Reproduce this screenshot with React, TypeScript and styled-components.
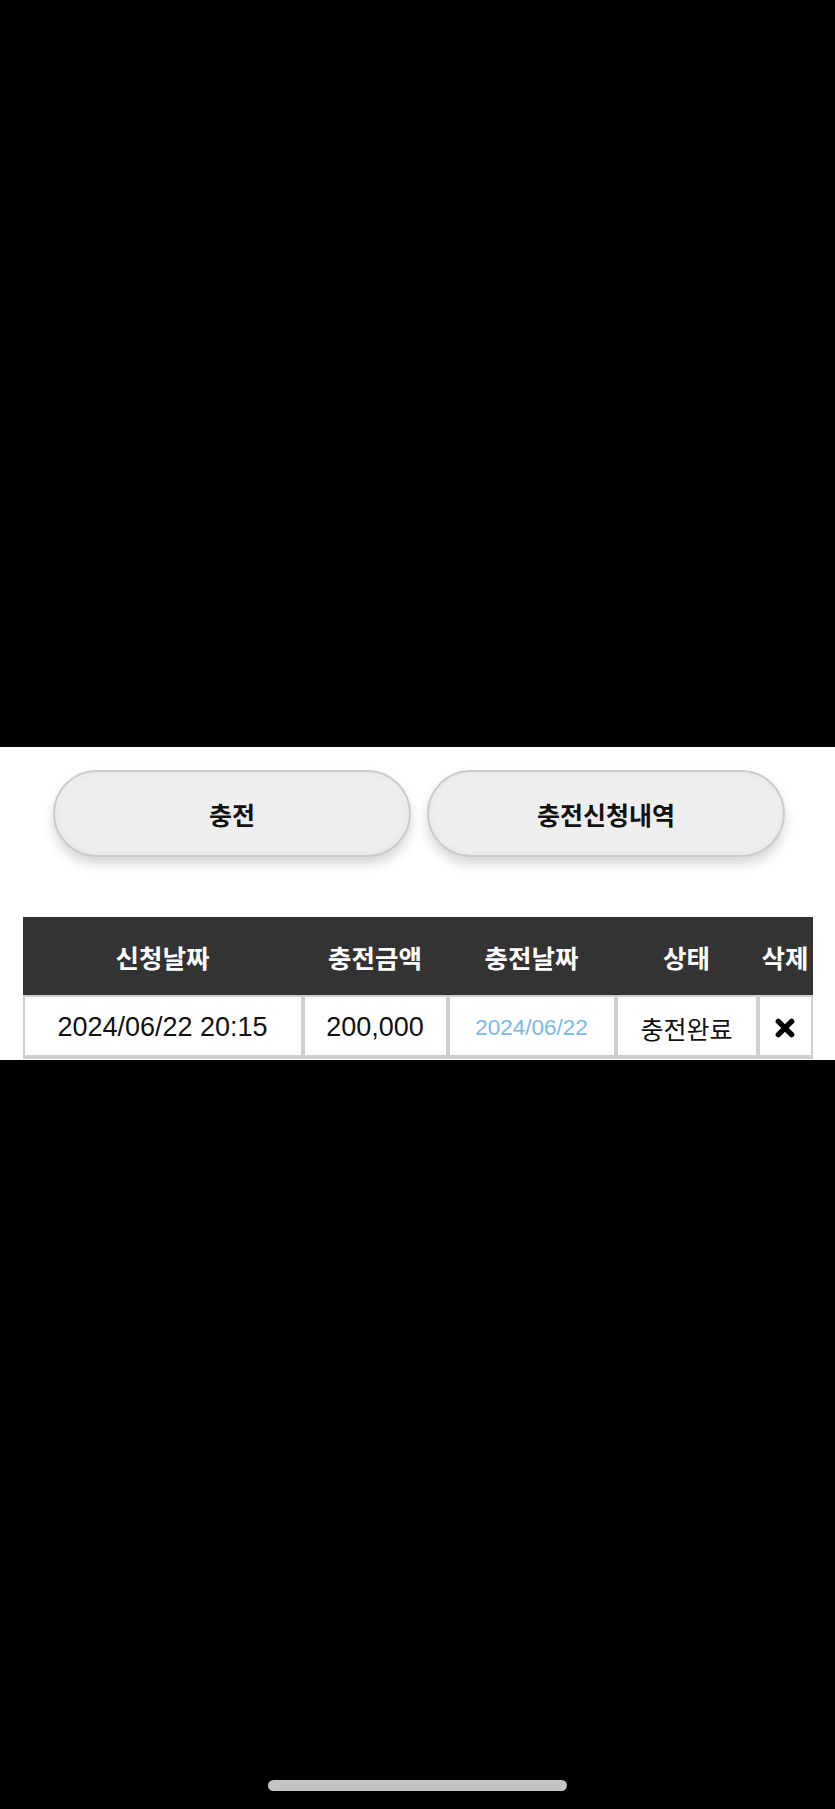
import React from "react";
import styled, { createGlobalStyle } from "styled-components";

const Global = createGlobalStyle`
  html, body { margin: 0; padding: 0; background: #000; }
  body { font-family: "Liberation Sans", "Noto Sans CJK KR", sans-serif; }
  * { box-sizing: border-box; }
`;

const Page = styled.div`
  position: relative;
  width: 835px;
  min-height: 1809px;
  display: flex;
  flex-direction: column;
  background: #000;
`;

const TopShade = styled.div`
  height: 747px;
  background: #000;
`;

const Panel = styled.section`
  background: #fff;
  display: flex;
  flex-direction: column;
  align-items: center;
  padding: 23px 0 1px;
`;

const ButtonRow = styled.div`
  display: flex;
  gap: 16px;
  padding-left: 3px;
`;

const PillButton = styled.button`
  width: 358px;
  height: 87px;
  border-radius: 44px;
  border: 2px solid #cbcbcb;
  background: #eeeeee;
  box-shadow: 0 7px 12px rgba(0, 0, 0, 0.16), inset 0 0 10px rgba(0, 0, 0, 0.04);
  font-family: "Liberation Sans", "Noto Sans CJK KR", sans-serif;
  font-size: 25px;
  font-weight: 700;
  color: #111;
  cursor: pointer;
  padding: 0;
`;

const Table = styled.table`
  margin-top: 60px;
  width: 790px;
  table-layout: fixed;
  border-collapse: separate;
  border-spacing: 0;
  border-bottom: 2px solid #cfcfcf;
`;

const HeadCell = styled.th`
  height: 78px;
  background: #333333;
  color: #fff;
  font-size: 25.5px;
  font-weight: 700;
  text-align: center;
  padding: 0;
  white-space: nowrap;
`;

const Cell = styled.td<{ $tone?: "blue" | "plain"; $size?: number }>`
  height: 62px;
  border: 2px solid #cfcfcf;
  background: #fff;
  text-align: center;
  vertical-align: middle;
  padding: 3px 0 0;
  white-space: nowrap;
  color: ${(p) => (p.$tone === "blue" ? "#7ab8ea" : "#111")};
  font-size: ${(p) => p.$size ?? 27}px;
`;

const Filler = styled.div`
  flex: 1;
  background: #000;
`;

const HomeIndicator = styled.div`
  position: absolute;
  left: 268px;
  top: 1780px;
  width: 299px;
  height: 11px;
  border-radius: 6px;
  background: #c4c4c4;
`;

const DeleteIcon = () => (
  <svg width="22" height="22" viewBox="0 0 20 20" style={{ display: "block", margin: "0 auto" }}>
    <path d="M4 4 L16 16 M16 4 L4 16" stroke="#000" strokeWidth="5" strokeLinecap="round" />
  </svg>
);

const columns = [280, 145, 168, 142, 55];

export default function App() {
  return (
    <>
      <Global />
      <Page>
        <TopShade />
        <Panel>
          <ButtonRow>
            <PillButton>충전</PillButton>
            <PillButton>충전신청내역</PillButton>
          </ButtonRow>
          <Table>
            <colgroup>
              {columns.map((w, i) => (
                <col key={i} style={{ width: w }} />
              ))}
            </colgroup>
            <thead>
              <tr>
                <HeadCell>신청날짜</HeadCell>
                <HeadCell>충전금액</HeadCell>
                <HeadCell>충전날짜</HeadCell>
                <HeadCell>상태</HeadCell>
                <HeadCell>삭제</HeadCell>
              </tr>
            </thead>
            <tbody>
              <tr>
                <Cell>2024/06/22 20:15</Cell>
                <Cell>200,000</Cell>
                <Cell $tone="blue" $size={22.5}>2024/06/22</Cell>
                <Cell $size={25}>충전완료</Cell>
                <Cell>
                  <DeleteIcon />
                </Cell>
              </tr>
            </tbody>
          </Table>
        </Panel>
        <Filler />
        <HomeIndicator />
      </Page>
    </>
  );
}
